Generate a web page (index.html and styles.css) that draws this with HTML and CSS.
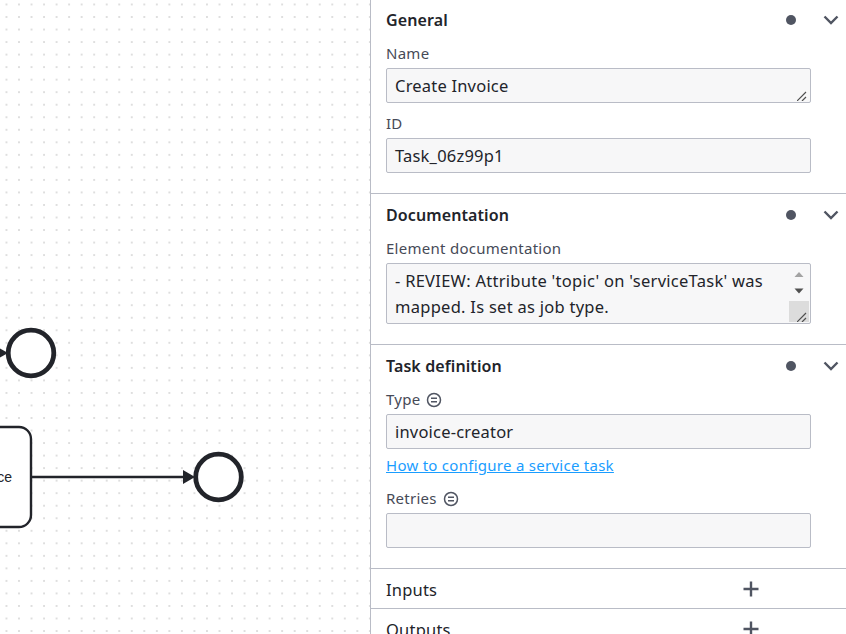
FILE: index.html
```html
<!DOCTYPE html>
<html lang="en">
<head>
<meta charset="utf-8">
<title>Properties panel</title>
<link rel="stylesheet" href="styles.css">
</head>
<body>
<div class="app">
  <main class="canvas">
    <svg class="diagram" width="370" height="634" viewBox="0 0 370 634">
      <rect x="-80" y="427" width="111" height="100" rx="12" class="shape thin"/>
      <text x="12" y="481.5" class="task-label" text-anchor="end">Create Invoice</text>
      <line x1="-10" y1="353" x2="2" y2="353" class="flow"/>
      <path d="M-2 347.5 L8 353 L-2 358.500Z" class="head"/>
      <circle cx="31" cy="353" r="22.800" class="shape thick"/>
      <line x1="32" y1="477" x2="186" y2="477" class="flow"/>
      <path d="M183 470 L195 477 L183 484Z" class="head"/>
      <circle cx="218.500" cy="477" r="22.800" class="shape thick"/>
    </svg>
  </main>
  <aside class="panel">
    <section class="group">
      <header class="group-head first">
        <h2 class="title">General</h2>
        <span class="dot"></span>
        <svg class="chev" width="16" height="16" viewBox="0 0 16 16"><path d="M1.500 4.500 L8 11 L14.500 4.500"/></svg>
      </header>
      <div class="field">
        <div class="label">Name</div>
        <div class="box">Create Invoice
          <svg class="grip" width="10" height="10" viewBox="0 0 10 10"><path d="M0 10 L9 1 M5 10 L9 6"/></svg>
        </div>
      </div>
      <div class="field">
        <div class="label">ID</div>
        <div class="box">Task_06z99p1</div>
      </div>
    </section>
    <section class="group">
      <header class="group-head">
        <h2 class="title">Documentation</h2>
        <span class="dot"></span>
        <svg class="chev" width="16" height="16" viewBox="0 0 16 16"><path d="M1.500 4.500 L8 11 L14.500 4.500"/></svg>
      </header>
      <div class="field">
        <div class="label">Element documentation</div>
        <div class="box doc">- REVIEW: Attribute 'topic' on 'serviceTask' was mapped. Is set as job type.
          <div class="scroll">
            <svg width="20" height="37" viewBox="0 0 20 37"><path class="up" d="M5.500 13 L10 8 L14.500 13Z"/><path class="down" d="M5.500 24.500 L14.500 24.500 L10 29.500Z"/></svg>
            <div class="thumb"></div>
          </div>
          <svg class="grip" width="10" height="10" viewBox="0 0 10 10"><path d="M0 10 L9 1 M5 10 L9 6"/></svg>
        </div>
      </div>
    </section>
    <section class="group">
      <header class="group-head">
        <h2 class="title">Task definition</h2>
        <span class="dot"></span>
        <svg class="chev" width="16" height="16" viewBox="0 0 16 16"><path d="M1.500 4.500 L8 11 L14.500 4.500"/></svg>
      </header>
      <div class="field">
        <div class="label">Type
          <svg class="feel" width="16" height="16" viewBox="0 0 16 16"><circle cx="8" cy="8" r="6.500"/><path d="M5 6.300 H11 M5 9.700 H11"/></svg>
        </div>
        <div class="box">invoice-creator</div>
        <a class="link" href="#">How to configure a service task</a>
      </div>
      <div class="field after-link">
        <div class="label">Retries
          <svg class="feel" width="16" height="16" viewBox="0 0 16 16"><circle cx="8" cy="8" r="6.500"/><path d="M5 6.300 H11 M5 9.700 H11"/></svg>
        </div>
        <div class="box"></div>
      </div>
    </section>
    <section class="group closed">
      <header class="group-head">
        <h2 class="title plain">Inputs</h2>
        <svg class="plus" width="16" height="16" viewBox="0 0 16 16"><path d="M8 .500 V15.500 M.5 8 H15.500"/></svg>
      </header>
    </section>
    <section class="group closed">
      <header class="group-head">
        <h2 class="title plain">Outputs</h2>
        <svg class="plus" width="16" height="16" viewBox="0 0 16 16"><path d="M8 .500 V15.500 M.5 8 H15.500"/></svg>
      </header>
    </section>
  </aside>
</div>
</body>
</html>
```
FILE: styles.css
```css
html, body {
  margin: 0;
  height: 100%;
  overflow: hidden;
  background: #fff;
}
body {
  font-family: "Noto Sans", "Liberation Sans", sans-serif;
  color: #22242a;
}
.app {
  display: flex;
  width: 846px;
  height: 634px;
  overflow: hidden;
}
.canvas {
  width: 370px;
  flex: none;
  background-color: #fff;
  background-image: radial-gradient(circle at 1px 1px, #dedede 0.8px, transparent 1px);
  background-size: 12.54px 12.54px;
  background-position: 5.5px 3.5px;
}
.diagram {
  display: block;
}
.shape {
  fill: #fff;
  stroke: #22242a;
}
.thin { stroke-width: 2.4; }
.thick { stroke-width: 4.8; }
.flow {
  stroke: #22242a;
  stroke-width: 2.4;
}
.head { fill: #22242a; }
.task-label {
  font-family: "Liberation Sans", sans-serif;
  font-size: 14px;
  fill: #22242a;
}
.panel {
  flex: 1;
  min-width: 0;
  border-left: 1px solid #b9bcc6;
  background: #fff;
}
.group {
  border-bottom: 1px solid #b9bcc6;
  padding-bottom: 20px;
}
.group.closed {
  padding-bottom: 0;
}
.group-head {
  display: flex;
  align-items: center;
  box-sizing: border-box;
  height: 40px;
  padding: 2px 7px 0 15px;
}
.group-head.first {
  height: 39px;
  padding-top: 0;
}
.group.closed .group-head {
  height: 39px;
  padding-top: 3px;
}
.title {
  flex: 1;
  margin: 0;
  font-size: 16px;
  font-weight: 600;
  line-height: 20px;
  letter-spacing: 0.1px;
}
.title.plain {
  font-size: 16.5px;
  font-weight: 400;
  letter-spacing: 0.2px;
}
.dot {
  width: 10px;
  height: 10px;
  border-radius: 50%;
  background: #505562;
  margin-right: 27px;
}
.chev {
  fill: none;
  stroke: #505562;
  stroke-width: 2.4;
}
.plus {
  fill: none;
  stroke: #505562;
  stroke-width: 2.4;
  margin: -2px 80px 0 0;
}
.field {
  padding: 0 35px 0 15px;
  margin-top: 11px;
}
.group-head + .field {
  margin-top: 5px;
}
.field.after-link {
  margin-top: 13px;
}
.label {
  display: flex;
  align-items: flex-start;
  gap: 6px;
  height: 20px;
  margin-bottom: 4px;
  font-size: 15px;
  line-height: 18px;
  letter-spacing: 0.27px;
  color: #464a57;
}
.box {
  position: relative;
  height: 35px;
  box-sizing: border-box;
  padding: 6px 8px;
  border: 1px solid #b9bcc6;
  border-radius: 2px;
  background: #f7f7f8;
  font-size: 16.5px;
  line-height: 21px;
  letter-spacing: 0.2px;
  color: #22242a;
  overflow: hidden;
}
.doc {
  height: 61px;
  padding: 4px 25px 0 8px;
  line-height: 26px;
  letter-spacing: 0.27px;
}
.grip {
  position: absolute;
  right: 3px;
  bottom: 1px;
  fill: none;
  stroke: #505050;
  stroke-width: 1.2;
}
.scroll {
  position: absolute;
  top: 0;
  right: 1px;
  bottom: 1px;
  width: 20px;
  display: flex;
  flex-direction: column;
}
.scroll svg {
  display: block;
  flex: none;
}
.up { fill: #a3a3a3; }
.down { fill: #505050; }
.thumb {
  flex: 1;
  background: #dcdcdc;
}
.feel {
  align-self: center;
  fill: none;
  stroke: #505562;
  stroke-width: 1.500;
}
.link {
  display: block;
  margin-top: 6px;
  padding-bottom: 1px;
  font-size: 15px;
  line-height: 20px;
  letter-spacing: 0.27px;
  color: #1a9dff;
  text-decoration: underline;
}
```
